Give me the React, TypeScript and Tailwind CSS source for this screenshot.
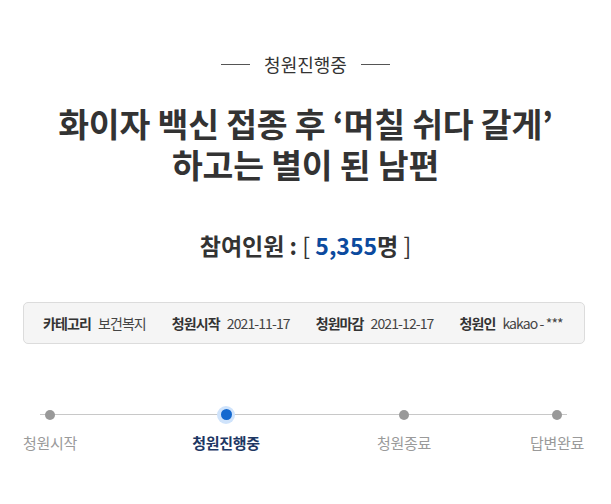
import React from 'react';

const font = { fontFamily: '"Noto Sans CJK KR", "Noto Sans", sans-serif' };

const infoItems = [
  { label: '카테고리', value: '보건복지' },
  { label: '청원시작', value: '2021-11-17' },
  { label: '청원마감', value: '2021-12-17' },
  { label: '청원인', value: 'kakao - ***' }
];

const steps = [
  { label: '청원시작', cls: 'ml-[0px] w-[52px]', active: false },
  { label: '청원진행중', cls: 'ml-[96px] w-[108px]', active: true },
  { label: '청원종료', cls: 'ml-[70px] w-[108px]', active: false },
  { label: '답변완료', cls: 'ml-[71px] w-[56px]', active: false }
];

export default function App() {
  return (
    <div className="w-[611px] h-[504px] bg-white text-[#333] flex flex-col items-center" style={font}>
      {/* Status header */}
      <div className="mt-[50px] flex items-center gap-[14px]">
        <span className="w-[29px] h-px bg-[#555]" />
        <span className="text-[18px] leading-[28px] text-[#333]">청원진행중</span>
        <span className="w-[29px] h-px bg-[#555]" />
      </div>

      {/* Title */}
      <h1 className="mt-[24px] text-center text-[33.5px] leading-[41px] font-bold tracking-[-0.2px] text-[#333]">
        화이자 백신 접종 후 ‘며칠 쉬다 갈게’
        <br />
        하고는 별이 된 남편
      </h1>

      {/* Participants */}
      <div className="mt-[45px] text-[23px] leading-[32px] font-bold text-[#333]">
        참여인원 : <span className="font-normal">[</span>{' '}
        <span className="text-[#0b4a9e]">5,355</span>명 <span className="font-normal">]</span>
      </div>

      {/* Info box */}
      <div className="mt-[41px] w-[562px] h-[42px] ml-[-3px] border border-[#dcdcdc] rounded-[5px] bg-[#f5f5f5] flex items-center pl-[19px] text-[14px] tracking-[-0.9px]">
        {infoItems.map((item, i) => (
          <div key={i} className={`flex items-center gap-[7px] ${i > 0 ? 'ml-[26px]' : ''}`}>
            <span className="font-bold text-[#333]">{item.label}</span>
            <span className="text-[#444]">{item.value}</span>
          </div>
        ))}
      </div>

      {/* Progress */}
      <div className="relative mt-[61px] self-stretch pl-[24px]">
        <div className="absolute left-[40px] w-[527px] top-[9px] h-px bg-[#c8c8c8]" />
        <div className="relative flex">
          {steps.map((s, i) => (
            <div key={i} className={`flex flex-col items-center ${s.cls}`}>
              <div className="h-[19px] flex items-center justify-center">
                {s.active ? (
                  <span className="w-[18px] h-[18px] rounded-full bg-[#cfe3fb] flex items-center justify-center">
                    <span className="w-[11px] h-[11px] rounded-full bg-[#1368cf]" />
                  </span>
                ) : (
                  <span className="w-[10px] h-[10px] rounded-full bg-[#999]" />
                )}
              </div>
              <span
                className={`mt-[8px] text-[15px] leading-[22px] whitespace-nowrap tracking-[-0.3px] ${
                  s.active ? 'font-bold text-[#1d3763]' : 'text-[#9a9a9a]'
                }`}
              >
                {s.label}
              </span>
            </div>
          ))}
        </div>
      </div>
    </div>
  );
}
